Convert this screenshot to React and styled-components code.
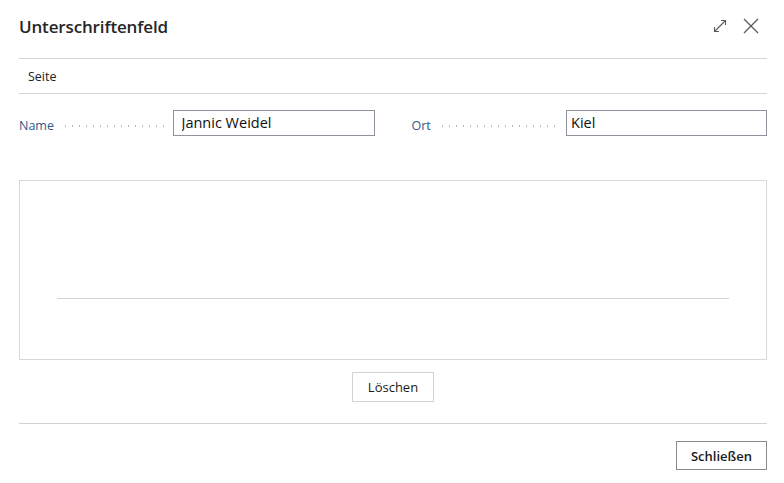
import React from 'react'
import styled, { createGlobalStyle } from 'styled-components'

const Global = createGlobalStyle`
  html, body {
    margin: 0;
    padding: 0;
    background: #fff;
  }
  body {
    font-family: "Open Sans", "Noto Sans", sans-serif;
    color: #212121;
  }
`;

const Dialog = styled.div`
  width: 784px;
  height: 483px;
  box-sizing: border-box;
  padding: 0 17px 0 19px;
  display: flex;
  flex-direction: column;
`;

const Header = styled.div`
  height: 59px;
  display: flex;
  align-items: center;
  justify-content: space-between;
  border-bottom: 1px solid #d6d6d6;
  padding-bottom: 6px;
  box-sizing: border-box;
`;

const Title = styled.h1`
  margin: 0;
  font-size: 17px;
  font-weight: 600;
  letter-spacing: -0.15px;
  color: #262626;
`;

const IconRow = styled.div`
  display: flex;
  align-items: center;
  gap: 15px;
  margin-right: 8px;
`;

const IconButton = styled.button`
  border: 0;
  background: none;
  padding: 0;
  width: 16px;
  height: 16px;
  display: flex;
  color: #5a5a5a;
  cursor: pointer;
`;

const TabBar = styled.div`
  height: 35px;
  display: flex;
  align-items: center;
  padding-left: 9px;
  font-size: 12.5px;
  border-bottom: 1px solid #d6d6d6;
  box-sizing: border-box;
`;

const Fields = styled.div`
  display: grid;
  grid-template-columns: 1fr 1fr;
  column-gap: 37px;
  margin-top: 16px;
`;

const Field = styled.label`
  display: grid;
  grid-template-columns: 1fr ${p => p.$inputWidth}px;
  column-gap: ${p => p.$gap}px;
  align-items: center;
`;

const LabelArea = styled.span`
  display: flex;
  align-items: center;
  font-size: 12.5px;
  color: #2e5a8c;
  padding-top: 5px;
`;

const Leader = styled.span`
  flex: 1;
  height: 2px;
  margin-left: ${p => p.$offset}px;
  margin-top: 1px;
  background-image: radial-gradient(circle, #b8b8b8 0.7px, transparent 1px);
  background-size: 7px 2px;
  background-repeat: repeat-x;
`;

const Input = styled.input`
  box-sizing: border-box;
  height: 26px;
  width: 100%;
  border: 1px solid #8e929c;
  padding: 0 8px 1px 8px;
  padding-left: ${p => p.$pad}px;
  font-family: "Open Sans", "Noto Sans", sans-serif;
  font-size: 14.5px;
  color: #111;
  outline: none;
`;

const SignatureBox = styled.div`
  margin-top: 44px;
  height: 180px;
  box-sizing: border-box;
  border: 1px solid #d8d8d8;
  display: flex;
  flex-direction: column;
  padding: 0 37px 0 37px;
`;

const SignLine = styled.div`
  margin-top: 117px;
  height: 1px;
  background: #d3d3d3;
`;

const CenterRow = styled.div`
  display: flex;
  justify-content: center;
  margin-top: 12px;
`;

const Button = styled.button`
  height: ${p => p.$h}px;
  padding: 0 ${p => p.$px}px;
  background: #fff;
  border: 1px solid ${p => p.$border};
  font-family: "Open Sans", "Noto Sans", sans-serif;
  font-size: 13px;
  font-weight: ${p => p.$weight};
  color: #1a1a1a;
  cursor: pointer;
`;

const Divider = styled.div`
  margin-top: 21px;
  height: 1px;
  background: #d3d3d3;
`;

const Footer = styled.div`
  display: flex;
  justify-content: flex-end;
  margin-top: 17px;
`;

function ExpandIcon() {
  return (
    <svg width="16" height="16" viewBox="0 0 16 16" fill="none" stroke="currentColor" strokeWidth="1.1">
      <path d="M2.5 13.5 L13.5 2.5" />
      <path d="M9 2.5 H13.5 V7" />
      <path d="M2.5 9 V13.5 H7" />
    </svg>
  )
}

function CloseIcon() {
  return (
    <svg width="16" height="16" viewBox="0 0 16 16" fill="none" stroke="currentColor" strokeWidth="1.3">
      <path d="M1 1 L15 15" />
      <path d="M15 1 L1 15" />
    </svg>
  )
}

export default function App() {
  return (
    <>
      <Global />
      <Dialog>
        <Header>
          <Title>Unterschriftenfeld</Title>
          <IconRow>
            <IconButton aria-label="Maximieren"><ExpandIcon /></IconButton>
            <IconButton aria-label="Schließen"><CloseIcon /></IconButton>
          </IconRow>
        </Header>

        <TabBar>Seite</TabBar>

        <Fields>
          <Field $inputWidth={202} $gap={7}>
            <LabelArea>Name<Leader $offset={8} /></LabelArea>
            <Input defaultValue="Jannic Weidel" $pad={8} />
          </Field>
          <Field $inputWidth={201} $gap={10}>
            <LabelArea>Ort<Leader $offset={8} /></LabelArea>
            <Input defaultValue="Kiel" $pad={4} />
          </Field>
        </Fields>

        <SignatureBox>
          <SignLine />
        </SignatureBox>

        <CenterRow>
          <Button $h={30} $px={15} $border="#d4d4d4" $weight={400}>Löschen</Button>
        </CenterRow>

        <Divider />

        <Footer>
          <Button $h={29} $px={14} $border="#8a8a8a" $weight={600}>Schließen</Button>
        </Footer>
      </Dialog>
    </>
  )
}
